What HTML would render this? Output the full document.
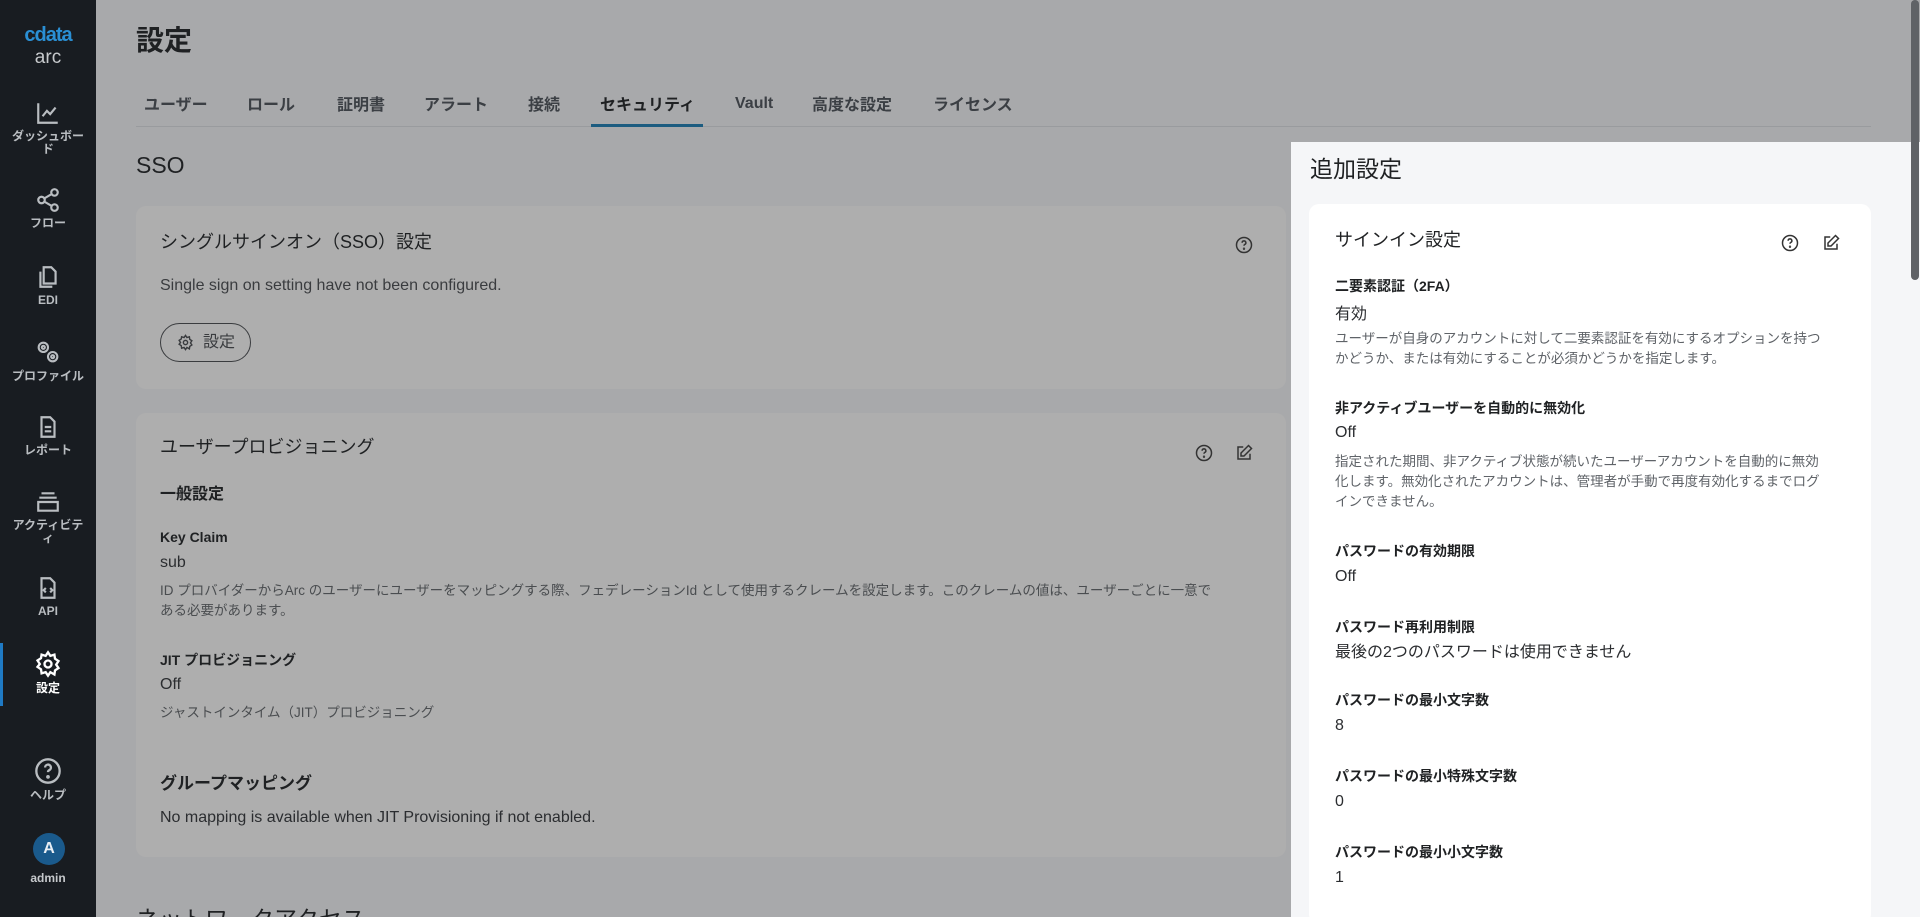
<!DOCTYPE html>
<html><head><meta charset="utf-8"><style>
*{margin:0;padding:0;box-sizing:border-box}
html,body{width:1920px;height:917px;overflow:hidden}
body{background:#a8a9ab;font-family:"Liberation Sans","Noto Sans CJK JP",sans-serif;color:#1f2123;position:relative}
.a{position:absolute;white-space:nowrap}
#side{position:absolute;left:0;top:0;width:96px;height:917px;background:#181c21}
.si{position:absolute;left:0;width:96px;text-align:center;color:#b9bdc1;font-size:12px;line-height:13px;font-weight:bold}
.si svg{display:block;margin:0 auto 4px}
.card{position:absolute;background:#aeaeae;border-radius:10px}
.tab{position:absolute;top:95px;font-size:16px;line-height:22px;height:22px;font-weight:bold;color:#3b3f44}
.lbl{font-size:14px;font-weight:bold}
.val{font-size:16px;color:#2b2d30}
.desc{font-size:13.5px;color:#4a4d50;line-height:20px}
.rp .desc{color:#5f6368}
</style></head><body>
<div id="side">
 <div class="a" style="left:0;width:96px;top:24px;text-align:center;color:#2a8fd4;font-size:20px;font-weight:bold;letter-spacing:-1px">cdata</div>
 <div class="a" style="left:0;width:96px;top:47px;text-align:center;color:#c6c9cc;font-size:19px">arc</div>
 <div class="si" style="top:100px"><svg width="26" height="26" viewBox="0 0 24 24" fill="none" stroke="#b9bdc1" stroke-width="2"><path d="M3 3v18h18M7 15l4-5 3 3 5-6"/></svg>ダッシュボー<br>ド</div>
 <div class="si" style="top:187px"><svg width="26" height="26" viewBox="0 0 24 24" fill="none" stroke="#b9bdc1" stroke-width="2"><circle cx="18" cy="5" r="3"/><circle cx="6" cy="12" r="3"/><circle cx="18" cy="19" r="3"/><path d="M8.6 13.5l6.8 4M15.4 6.5l-6.8 4"/></svg>フロー</div>
 <div class="si" style="top:264px"><svg width="26" height="26" viewBox="0 0 24 24" fill="none" stroke="#b9bdc1" stroke-width="2"><path d="M8 3h7l4 4v11H8zM5 7v14h11"/></svg>EDI</div>
 <div class="si" style="top:338px"><svg width="28" height="28" viewBox="0 0 24 24" fill="none" stroke="#b9bdc1" stroke-width="1.8"><circle cx="8" cy="8" r="4"/><circle cx="16" cy="16" r="4"/><circle cx="8" cy="8" r="1.3"/><circle cx="16" cy="16" r="1.3"/></svg>プロファイル</div>
 <div class="si" style="top:414px"><svg width="26" height="26" viewBox="0 0 24 24" fill="none" stroke="#b9bdc1" stroke-width="2"><path d="M6 3h8l4 4v14H6zM9 12h6M9 16h6"/></svg>レポート</div>
 <div class="si" style="top:489px"><svg width="26" height="26" viewBox="0 0 24 24" fill="none" stroke="#b9bdc1" stroke-width="2"><path d="M6 4h12M4 8h16M3 12h18v8H3z"/></svg>アクティビテ<br>ィ</div>
 <div class="si" style="top:575px"><svg width="26" height="26" viewBox="0 0 24 24" fill="none" stroke="#b9bdc1" stroke-width="2"><path d="M6 3h8l4 4v14H6zM10 12l-2 2 2 2M14 12l2 2-2 2"/></svg>API</div>
 <div class="a" style="left:0;top:643px;width:3px;height:63px;background:#1f7ac4"></div>
 <div class="si" style="top:650px;color:#fff"><svg width="28" height="28" viewBox="0 0 24 24" fill="none" stroke="#fff" stroke-width="2"><circle cx="12" cy="12" r="3"/><path d="M12 2l2 3 3.5-1 .5 3.5 3 2-2 3 2 3-3 2-.5 3.5L14 19l-2 3-2-3-3.5 1L6 16.5l-3-2 2-2.5-2-3 3-2L6.5 4 10 5z"/></svg>設定</div>
 <div class="si" style="top:757px"><svg width="28" height="28" viewBox="0 0 24 24" fill="none" stroke="#b9bdc1" stroke-width="2"><circle cx="12" cy="12" r="10"/><path d="M9.5 9a2.5 2.5 0 1 1 3.5 2.3c-.7.4-1 1-1 1.7"/><circle cx="12" cy="17" r=".6" fill="#b9bdc1"/></svg>ヘルプ</div>
 <div class="a" style="left:33px;top:833px;width:32px;height:32px;border-radius:50%;background:#1a5a8c;color:#e8eef4;font-weight:bold;font-size:16px;text-align:center;line-height:32px">A</div>
 <div class="si" style="top:872px;color:#c6c9cc">admin</div>
</div>

<div class="a" style="left:136px;top:19px;font-size:28px;font-weight:bold">設定</div>
<div class="tab" style="left:144px">ユーザー</div>
<div class="tab" style="left:247px">ロール</div>
<div class="tab" style="left:337px">証明書</div>
<div class="tab" style="left:424px">アラート</div>
<div class="tab" style="left:528px">接続</div>
<div class="tab" style="left:600px;color:#1f2123">セキュリティ</div>
<div class="tab" style="left:735px;top:93px">Vault</div>
<div class="tab" style="left:812px">高度な設定</div>
<div class="tab" style="left:933px">ライセンス</div>
<div class="a" style="left:136px;top:126px;width:1735px;height:1px;background:#999b9e"></div>
<div class="a" style="left:591px;top:124px;width:112px;height:3px;background:#1c5c80"></div>

<div class="a" style="left:136px;top:152px;font-size:23px">SSO</div>
<div class="card" style="left:136px;top:206px;width:1150px;height:183px"></div>
<div class="a" style="left:160px;top:228px;font-size:18px">シングルサインオン（SSO）設定</div>
<svg class="a" style="left:1235px;top:236px" width="18" height="18" viewBox="0 0 24 24" fill="none" stroke="#333" stroke-width="2"><circle cx="12" cy="12" r="10"/><path d="M9.5 9a2.5 2.5 0 1 1 3.5 2.3c-.7.4-1 1-1 1.7"/><circle cx="12" cy="17" r=".6"/></svg>
<div class="a" style="left:160px;top:277px;font-size:16px;color:#3a3c3f">Single sign on setting have not been configured.</div>
<div class="a" style="left:160px;top:323px;width:91px;height:39px;border:1px solid #3a3c3f;border-radius:20px;font-size:16px;line-height:37px;padding-left:42px;color:#3a3c3f">設定</div>
<svg class="a" style="left:177px;top:334px" width="17" height="17" viewBox="0 0 24 24" fill="none" stroke="#3a3c3f" stroke-width="2"><circle cx="12" cy="12" r="3"/><path d="M12 2l2 3 3.5-1 .5 3.5 3 2-2 3 2 3-3 2-.5 3.5L14 19l-2 3-2-3-3.5 1L6 16.5l-3-2 2-2.5-2-3 3-2L6.5 4 10 5z"/></svg>

<div class="card" style="left:136px;top:413px;width:1150px;height:444px"></div>
<div class="a" style="left:160px;top:433px;font-size:18px">ユーザープロビジョニング</div>
<svg class="a" style="left:1195px;top:444px" width="18" height="18" viewBox="0 0 24 24" fill="none" stroke="#333" stroke-width="2"><circle cx="12" cy="12" r="10"/><path d="M9.5 9a2.5 2.5 0 1 1 3.5 2.3c-.7.4-1 1-1 1.7"/><circle cx="12" cy="17" r=".6"/></svg>
<svg class="a" style="left:1235px;top:444px" width="18" height="18" viewBox="0 0 24 24" fill="none" stroke="#333" stroke-width="2"><path d="M11 4H4v16h16v-7M18 2l4 4-10 10H8v-4z"/></svg>
<div class="a" style="left:160px;top:480px;font-size:16px;font-weight:bold">一般設定</div>
<div class="a lbl" style="left:160px;top:529px">Key Claim</div>
<div class="a val" style="left:160px;top:554px">sub</div>
<div class="a desc" style="left:160px;top:581px">ID プロバイダーからArc のユーザーにユーザーをマッピングする際、フェデレーションId として使用するクレームを設定します。このクレームの値は、ユーザーごとに一意で<br>ある必要があります。</div>
<div class="a lbl" style="left:160px;top:650px">JIT プロビジョニング</div>
<div class="a val" style="left:160px;top:676px">Off</div>
<div class="a desc" style="left:160px;top:703px">ジャストインタイム（JIT）プロビジョニング</div>
<div class="a" style="left:160px;top:769px;font-size:17px;font-weight:bold">グループマッピング</div>
<div class="a val" style="left:160px;top:809px">No mapping is available when JIT Provisioning if not enabled.</div>
<div class="a" style="left:136px;top:900px;font-size:23px">ネットワークアクセス</div>

<div class="rp a" style="left:1291px;top:142px;width:629px;height:775px;background:#f5f6f8;overflow:hidden">
 <div class="a" style="left:19px;top:8px;font-size:23px">追加設定</div>
 <div class="a" style="left:18px;top:62px;width:562px;height:720px;background:#fff;border-radius:10px">
  <div class="a" style="left:26px;top:22px;font-size:18px">サインイン設定</div>
  <svg class="a" style="left:472px;top:30px" width="18" height="18" viewBox="0 0 24 24" fill="none" stroke="#333" stroke-width="2"><circle cx="12" cy="12" r="10"/><path d="M9.5 9a2.5 2.5 0 1 1 3.5 2.3c-.7.4-1 1-1 1.7"/><circle cx="12" cy="17" r=".6"/></svg>
  <svg class="a" style="left:513px;top:30px" width="18" height="18" viewBox="0 0 24 24" fill="none" stroke="#333" stroke-width="2"><path d="M11 4H4v16h16v-7M18 2l4 4-10 10H8v-4z"/></svg>
  <div class="a lbl" style="left:26px;top:72px">二要素認証（2FA）</div>
  <div class="a val" style="left:26px;top:96px">有効</div>
  <div class="a desc" style="left:26px;top:125px">ユーザーが自身のアカウントに対して二要素認証を有効にするオプションを持つ<br>かどうか、または有効にすることが必須かどうかを指定します。</div>
  <div class="a lbl" style="left:26px;top:194px">非アクティブユーザーを自動的に無効化</div>
  <div class="a val" style="left:26px;top:220px">Off</div>
  <div class="a desc" style="left:26px;top:248px">指定された期間、非アクティブ状態が続いたユーザーアカウントを自動的に無効<br>化します。無効化されたアカウントは、管理者が手動で再度有効化するまでログ<br>インできません。</div>
  <div class="a lbl" style="left:26px;top:337px">パスワードの有効期限</div>
  <div class="a val" style="left:26px;top:364px">Off</div>
  <div class="a lbl" style="left:26px;top:413px">パスワード再利用制限</div>
  <div class="a val" style="left:26px;top:434px">最後の2つのパスワードは使用できません</div>
  <div class="a lbl" style="left:26px;top:486px">パスワードの最小文字数</div>
  <div class="a val" style="left:26px;top:513px">8</div>
  <div class="a lbl" style="left:26px;top:562px">パスワードの最小特殊文字数</div>
  <div class="a val" style="left:26px;top:589px">0</div>
  <div class="a lbl" style="left:26px;top:638px">パスワードの最小小文字数</div>
  <div class="a val" style="left:26px;top:665px">1</div>
 </div>
</div>
<div class="a" style="left:1911px;top:0;width:8px;height:280px;background:#5f6266;border-radius:4px"></div>
</body></html>
